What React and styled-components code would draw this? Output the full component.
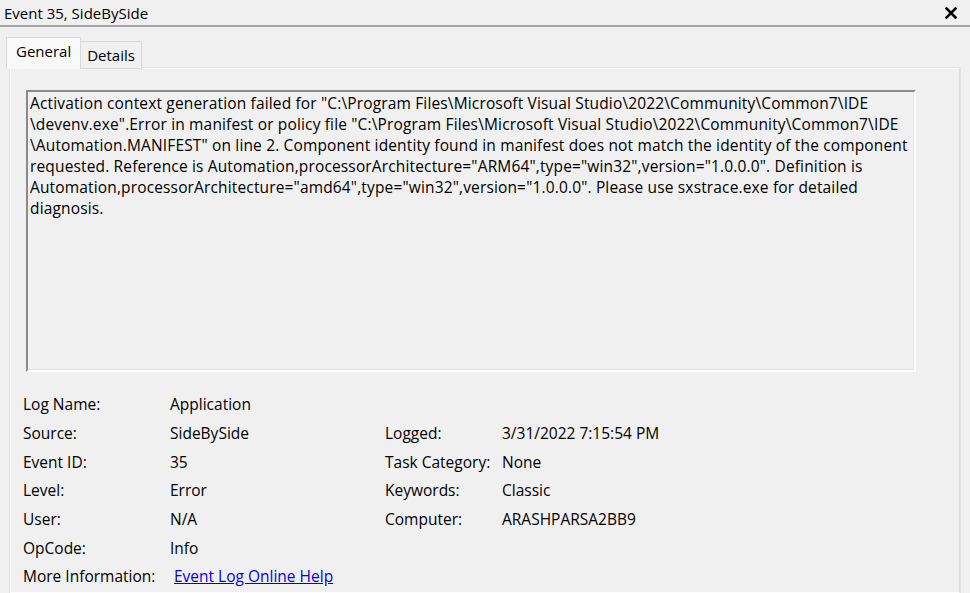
import React, { useState } from 'react';
import styled, { createGlobalStyle } from 'styled-components';

const GlobalStyle = createGlobalStyle`
    html, body {
        margin: 0;
        padding: 0;
        background: #f0f0f0;
    }
    body {
        font-family: "Segoe UI", "Open Sans", "Noto Sans", sans-serif;
        color: #000;
    }
`;

const Window = styled.div`
    width: 970px;
    height: 593px;
    overflow: hidden;
    background: #f0f0f0;
    display: flex;
    flex-direction: column;
`;

const TitleBar = styled.div`
    height: 25px;
    display: flex;
    align-items: center;
    justify-content: space-between;
    padding: 0 12px 0 4px;
    font-size: 15px;
    border-bottom: 2px solid #a5a5a5;
`;

const CloseButton = styled.button`
    border: none;
    background: none;
    padding: 0;
    width: 14px;
    height: 14px;
    display: flex;
    align-items: center;
    justify-content: center;
`;

const Body = styled.div`
    padding: 10px 10px 0 6px;
    flex: 1;
    display: flex;
    flex-direction: column;
`;

const TabStrip = styled.div`
    display: flex;
    align-items: flex-end;
    height: 32px;
    position: relative;
    z-index: 1;
`;

const Tab = styled.div`
    height: ${p => (p.$active ? '32px' : '28px')};
    padding: 0 ${p => (p.$active ? '9px' : '6px')};
    display: flex;
    align-items: ${p => (p.$active ? 'flex-start' : 'center')};
    padding-top: ${p => (p.$active ? '3px' : '0')};
    box-sizing: border-box;
    font-size: 15px;
    background: ${p => (p.$active ? '#f9f9f9' : '#f0f0f0')};
    border: 1px solid #d9d9d9;
    border-bottom: ${p => (p.$active ? 'none' : '1px solid #d9d9d9')};
    margin-left: ${p => (p.$active ? '0' : '-1px')};
    cursor: default;
`;

const Panel = styled.div`
    flex: 1;
    margin-left: 4px;
    margin-top: -1px;
    border: 1px solid #fdfdfd;
    border-right: 1px solid #dcdcdc;
    outline: 1px solid #e3e3e3;
    background: #f0f0f0;
    padding: 21px 43px 0 15px;
    display: flex;
    flex-direction: column;
`;

const MessageBox = styled.div`
    height: 282px;
    box-sizing: border-box;
    border-top: 2px solid #8a8a8a;
    border-left: 2px solid #8a8a8a;
    border-right: 2px solid #fcfcfc;
    border-bottom: 2px solid #fcfcfc;
    box-shadow: inset -1px -1px 0 #e3e3e3;
    padding: 1px 0 0 2px;
    font-size: 15.5px;
    letter-spacing: 0.15px;
    line-height: 21px;
`;

const Line = styled.div`
    white-space: nowrap;
`;

const Details = styled.div`
    margin: 18px 0 0 -3px;
    display: grid;
    grid-template-columns: 147px 215px 117px 1fr;
    grid-auto-rows: 28.7px;
    align-items: center;
    font-size: 15.5px;
`;

const Label = styled.span``;

const Value = styled.span``;

const HelpLink = styled.a`
    color: #0000ee;
    text-decoration: underline;
    cursor: pointer;
    padding-left: 4px;
`;

const message = [
    'Activation context generation failed for "C:\\Program Files\\Microsoft Visual Studio\\2022\\Community\\Common7\\IDE',
    '\\devenv.exe".Error in manifest or policy file "C:\\Program Files\\Microsoft Visual Studio\\2022\\Community\\Common7\\IDE',
    '\\Automation.MANIFEST" on line 2. Component identity found in manifest does not match the identity of the component',
    'requested. Reference is Automation,processorArchitecture="ARM64",type="win32",version="1.0.0.0". Definition is',
    'Automation,processorArchitecture="amd64",type="win32",version="1.0.0.0". Please use sxstrace.exe for detailed',
    'diagnosis.',
];

const rows = [
    ['Log Name:', 'Application', '', ''],
    ['Source:', 'SideBySide', 'Logged:', '3/31/2022 7:15:54 PM'],
    ['Event ID:', '35', 'Task Category:', 'None'],
    ['Level:', 'Error', 'Keywords:', 'Classic'],
    ['User:', 'N/A', 'Computer:', 'ARASHPARSA2BB9'],
    ['OpCode:', 'Info', '', ''],
];

const App = () => {
    const [tab, setTab] = useState('general');

    return (
        <>
            <GlobalStyle />
            <Window>
                <TitleBar>
                    <span>Event 35, SideBySide</span>
                    <CloseButton aria-label="Close">
                        <svg width="12" height="12" viewBox="0 0 12 12">
                            <path d="M1.5 1.5 L10.5 10.5 M10.5 1.5 L1.5 10.5" stroke="#000" strokeWidth="2.6" strokeLinecap="square" />
                        </svg>
                    </CloseButton>
                </TitleBar>
                <Body>
                    <TabStrip>
                        <Tab $active={tab === 'general'} onClick={() => setTab('general')}>General</Tab>
                        <Tab $active={tab === 'details'} onClick={() => setTab('details')}>Details</Tab>
                    </TabStrip>
                    <Panel>
                        <MessageBox>
                            {message.map((l, i) => (
                                <Line key={i}>{l}</Line>
                            ))}
                        </MessageBox>
                        <Details>
                            {rows.map((r, i) => (
                                <React.Fragment key={i}>
                                    <Label>{r[0]}</Label>
                                    <Value>{r[1]}</Value>
                                    <Label>{r[2]}</Label>
                                    <Value>{r[3]}</Value>
                                </React.Fragment>
                            ))}
                            <Label>More Information:</Label>
                            <HelpLink>Event Log Online Help</HelpLink>
                        </Details>
                    </Panel>
                </Body>
            </Window>
        </>
    );
};

export default App;
